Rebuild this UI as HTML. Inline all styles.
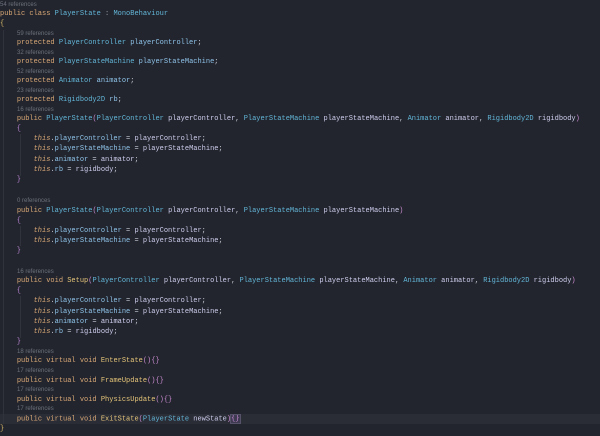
<!DOCTYPE html>
<html><head><meta charset="utf-8"><style>
html,body{margin:0;padding:0;}
body{width:600px;height:434px;background:#22252d;overflow:hidden;position:relative;font-family:"Liberation Mono",monospace;font-size:7px;color:#c8cbd6;}
#w{position:absolute;left:0;top:2px;width:600px;height:434px;}
.l{position:absolute;left:0;height:10px;line-height:10px;white-space:pre;}
.c{font-family:"Liberation Sans",sans-serif;font-size:6px;color:#6c717c;line-height:8px;height:8px;}
.k{color:#d9a877}
.t{color:#63b6d9}
.f{color:#8fc3ea}
.p{color:#cfcdee}
.m{color:#e5c47a}
.th{color:#d9a877;font-style:italic}
.pn{color:#c88ad0}
.br{color:#d8b86a}
.bp{color:#b884d4}
.g{color:#9aa0aa}
.hl{position:absolute;left:0;width:600px;top:412px;height:10px;background:#2a2d36;}
.guide{position:absolute;left:3px;width:1px;background:#30333c;}
</style></head><body><div id="w">
<div class="hl"></div>
<div class="guide" style="top:28px;height:394px"></div>
<div class="guide" style="left:20px;top:132px;height:42px"></div>
<div class="guide" style="left:20px;top:224px;height:20px"></div>
<div class="guide" style="left:20px;top:294px;height:42px"></div>
<div class="l c" style="top:-1px">54 references</div>
<div class="l" style="top:7px"><span class="k">public class</span> <span class="t">PlayerState</span> <span class="g">:</span> <span class="t">MonoBehaviour</span></div>
<div class="l br" style="top:17px">{</div>
<div class="l c" style="top:28px;left:17px">59 references</div>
<div class="l" style="top:36px">    <span class="k">protected</span> <span class="t">PlayerController</span> <span class="f">playerController</span>;</div>
<div class="l c" style="top:47px;left:17px">32 references</div>
<div class="l" style="top:55px">    <span class="k">protected</span> <span class="t">PlayerStateMachine</span> <span class="f">playerStateMachine</span>;</div>
<div class="l c" style="top:66px;left:17px">52 references</div>
<div class="l" style="top:74px">    <span class="k">protected</span> <span class="t">Animator</span> <span class="f">animator</span>;</div>
<div class="l c" style="top:85px;left:17px">23 references</div>
<div class="l" style="top:93px">    <span class="k">protected</span> <span class="t">Rigidbody2D</span> <span class="f">rb</span>;</div>
<div class="l c" style="top:104px;left:17px">16 references</div>
<div class="l" style="top:112px">    <span class="k">public</span> <span class="t">PlayerState</span><span class="pn">(</span><span class="t">PlayerController</span> <span class="p">playerController</span>, <span class="t">PlayerStateMachine</span> <span class="p">playerStateMachine</span>, <span class="t">Animator</span> <span class="p">animator</span>, <span class="t">Rigidbody2D</span> <span class="p">rigidbody</span><span class="pn">)</span></div>
<div class="l bp" style="top:122px">    {</div>
<div class="l" style="top:132px">        <span class="th">this</span>.<span class="f">playerController</span> = <span class="p">playerController</span>;</div>
<div class="l" style="top:142px">        <span class="th">this</span>.<span class="f">playerStateMachine</span> = <span class="p">playerStateMachine</span>;</div>
<div class="l" style="top:153px">        <span class="th">this</span>.<span class="f">animator</span> = <span class="p">animator</span>;</div>
<div class="l" style="top:163px">        <span class="th">this</span>.<span class="f">rb</span> = <span class="p">rigidbody</span>;</div>
<div class="l bp" style="top:173px">    }</div>
<div class="l c" style="top:195px;left:17px">0 references</div>
<div class="l" style="top:204px">    <span class="k">public</span> <span class="t">PlayerState</span><span class="pn">(</span><span class="t">PlayerController</span> <span class="p">playerController</span>, <span class="t">PlayerStateMachine</span> <span class="p">playerStateMachine</span><span class="pn">)</span></div>
<div class="l bp" style="top:214px">    {</div>
<div class="l" style="top:224px">        <span class="th">this</span>.<span class="f">playerController</span> = <span class="p">playerController</span>;</div>
<div class="l" style="top:234px">        <span class="th">this</span>.<span class="f">playerStateMachine</span> = <span class="p">playerStateMachine</span>;</div>
<div class="l bp" style="top:244px">    }</div>
<div class="l c" style="top:266px;left:17px">16 references</div>
<div class="l" style="top:274px">    <span class="k">public void</span> <span class="m">Setup</span><span class="pn">(</span><span class="t">PlayerController</span> <span class="p">playerController</span>, <span class="t">PlayerStateMachine</span> <span class="p">playerStateMachine</span>, <span class="t">Animator</span> <span class="p">animator</span>, <span class="t">Rigidbody2D</span> <span class="p">rigidbody</span><span class="pn">)</span></div>
<div class="l bp" style="top:284px">    {</div>
<div class="l" style="top:294px">        <span class="th">this</span>.<span class="f">playerController</span> = <span class="p">playerController</span>;</div>
<div class="l" style="top:305px">        <span class="th">this</span>.<span class="f">playerStateMachine</span> = <span class="p">playerStateMachine</span>;</div>
<div class="l" style="top:315px">        <span class="th">this</span>.<span class="f">animator</span> = <span class="p">animator</span>;</div>
<div class="l" style="top:325px">        <span class="th">this</span>.<span class="f">rb</span> = <span class="p">rigidbody</span>;</div>
<div class="l bp" style="top:335px">    }</div>
<div class="l c" style="top:346px;left:17px">18 references</div>
<div class="l" style="top:354px">    <span class="k">public virtual void</span> <span class="m">EnterState</span><span class="pn">(){}</span></div>
<div class="l c" style="top:365px;left:17px">17 references</div>
<div class="l" style="top:374px">    <span class="k">public virtual void</span> <span class="m">FrameUpdate</span><span class="pn">(){}</span></div>
<div class="l c" style="top:384px;left:17px">17 references</div>
<div class="l" style="top:393px">    <span class="k">public virtual void</span> <span class="m">PhysicsUpdate</span><span class="pn">(){}</span></div>
<div class="l c" style="top:403px;left:17px">17 references</div>
<div class="l" style="top:412px">    <span class="k">public virtual void</span> <span class="m">ExitState</span><span class="pn">(</span><span class="t">PlayerState</span> <span class="p">newState</span><span class="pn">)</span><span class="pn" style="background:#3d3a52;outline:1px solid #55526a">{}</span><span style="display:inline-block;width:1px;height:9px;background:#d0d0d0;vertical-align:middle"></span></div>
<div class="l br" style="top:422px">}</div>
</div></body></html>
